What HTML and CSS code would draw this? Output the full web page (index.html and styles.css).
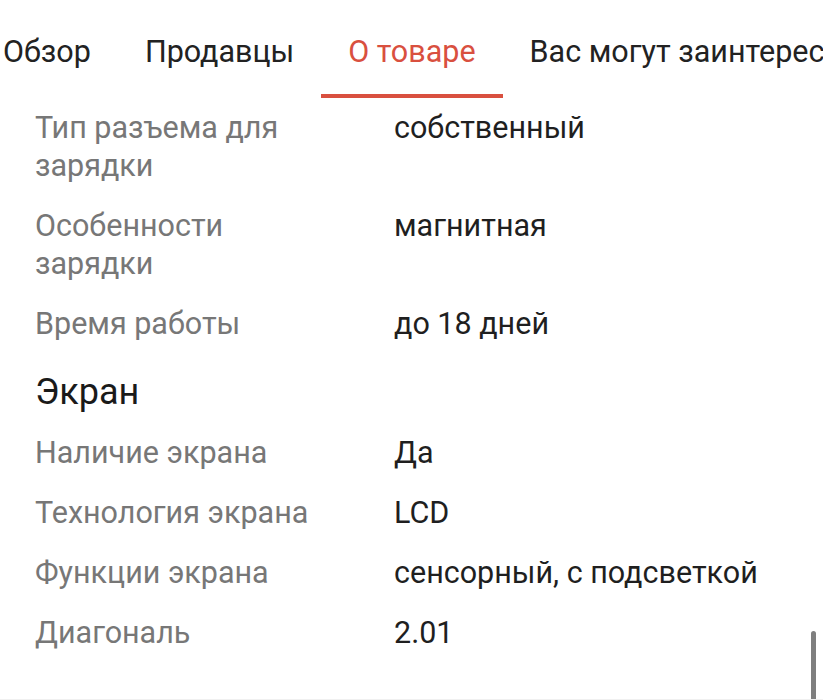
FILE: index.html
```html
<!DOCTYPE html>
<html lang="ru">
<head>
<meta charset="utf-8">
<title>О товаре</title>
<link rel="stylesheet" href="styles.css">
</head>
<body>
<div class="page">
  <div class="cut"><div class="cut-title">Питание</div></div>
  <nav class="tabs">
    <div class="tab">Обзор</div>
    <div class="tab">Продавцы</div>
    <div class="tab active">О товаре</div>
    <div class="tab">Вас могут заинтересовать</div>
  </nav>
  <section class="specs">
    <div class="row"><div class="label">Тип разъема для зарядки</div><div class="value">собственный</div></div>
    <div class="row"><div class="label">Особенности зарядки</div><div class="value">магнитная</div></div>
    <div class="row"><div class="label">Время работы</div><div class="value">до 18 дней</div></div>
    <h2 class="group">Экран</h2>
    <div class="row"><div class="label">Наличие экрана</div><div class="value">Да</div></div>
    <div class="row"><div class="label">Технология экрана</div><div class="value">LCD</div></div>
    <div class="row"><div class="label">Функции экрана</div><div class="value">сенсорный, с подсветкой</div></div>
    <div class="row"><div class="label">Диагональ</div><div class="value">2.01</div></div>
  </section>
  <div class="scrollbar"></div>
</div>
</body>
</html>
```
FILE: styles.css
```css
* { box-sizing: border-box; }
html, body {
  margin: 0;
  padding: 0;
  background: #ffffff;
}
body {
  font-family: Roboto, "Noto Sans", "Liberation Sans", sans-serif;
  color: #1f1f1f;
  overflow: hidden;
}
.page {
  position: relative;
  width: 823px;
  height: 700px;
  overflow: hidden;
  border-bottom: 1px solid #f0f0f0;
}
.cut {
  height: 8px;
  overflow: hidden;
  padding-left: 35px;
}
.cut-title {
  font-size: 36px;
  line-height: 40px;
  margin-top: -33px;
  color: #d4d4d4;
}
.tabs {
  display: flex;
  margin-left: -24px;
  margin-top: 2px;
  white-space: nowrap;
}
.tab {
  flex: none;
  font-size: 30.5px;
  line-height: 36px;
  padding: 24px 27px 24px;
  border-bottom: 4px solid transparent;
  color: #222222;
}
.tab.active {
  color: #d9503f;
  border-bottom-color: #d9503f;
}
.specs {
  padding: 0 0 0 35px;
}
.row {
  display: grid;
  grid-template-columns: 290px 1fr;
  column-gap: 69px;
  padding: 11px 0;
  font-size: 30.5px;
  line-height: 38px;
}
.label {
  color: #777777;
}
.value {
  color: #1f1f1f;
}
.group {
  margin: 16px 0 9px;
  font-size: 36px;
  line-height: 44px;
  font-weight: 400;
  color: #1a1a1a;
}
.scrollbar {
  position: absolute;
  right: 7px;
  top: 631px;
  width: 5px;
  height: 80px;
  border-radius: 3px 3px 0 0;
  background: #7f7f7f;
}
```
